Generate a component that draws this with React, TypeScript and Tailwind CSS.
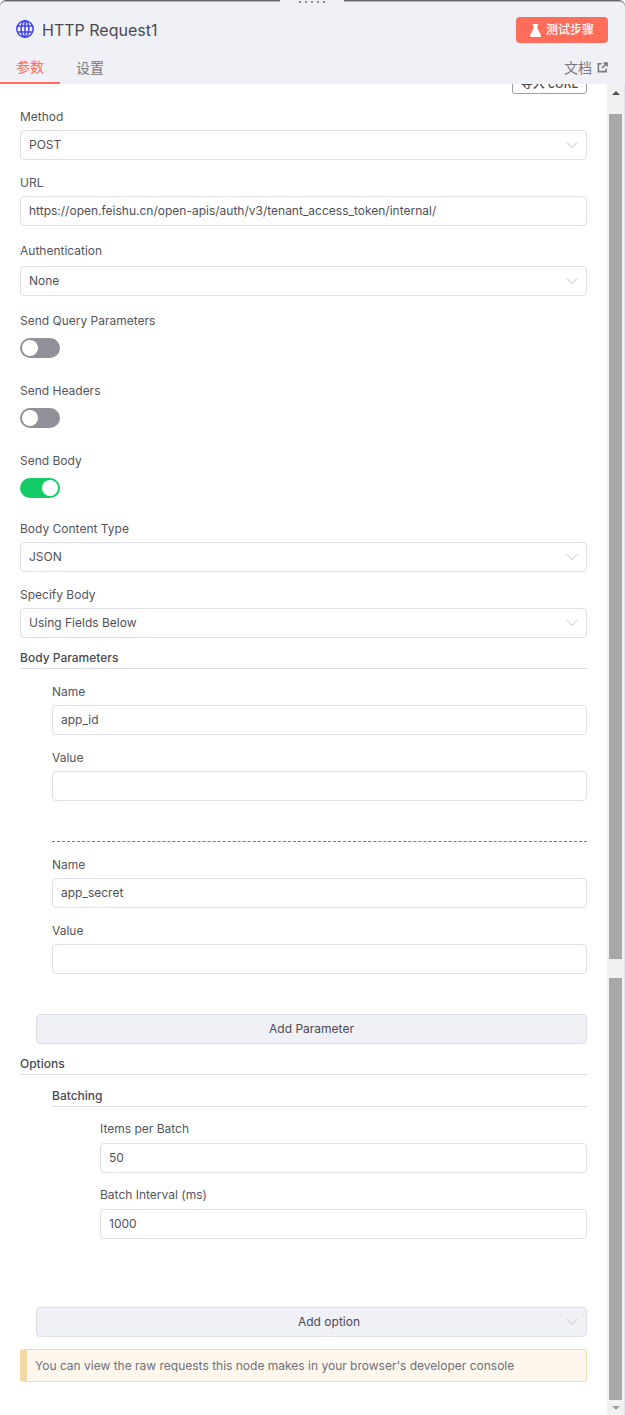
import React from 'react';
import { ChevronDown } from 'lucide-react';

const inputBase =
  'flex h-[30px] items-center rounded-[4px] border border-[#dcdfe8] bg-white px-2 text-[12px] text-[#505057]';

const Label = ({ text, className = '' }: { text: string; className?: string }) => (
  <div className={`flex h-5 items-center text-[12px] text-[#55555c] ${className}`}>{text}</div>
);

const Select = ({ value }: { value: string }) => (
  <div className={`${inputBase} justify-between`}>
    <span>{value}</span>
    <ChevronDown className="-mr-1 h-5 w-5 text-[#b9bac2]" strokeWidth={1.1} />
  </div>
);

const Input = ({ value = '' }: { value?: string }) => <div className={inputBase}>{value}</div>;

const Toggle = ({ on = false }: { on?: boolean }) => (
  <div
    className={`flex h-5 w-10 items-center rounded-full p-[2px] ${
      on ? 'justify-end bg-[#14cc66]' : 'justify-start bg-[#8f9098]'
    }`}
  >
    <div className="h-4 w-4 rounded-full bg-white" />
  </div>
);

const SectionTitle = ({ text, tall = false, className = '' }: { text: string; tall?: boolean; className?: string }) => (
  <div
    className={`flex items-center border-b border-[#dcdce6] text-[12px] font-medium text-[#4a4a52] ${
      tall ? 'h-[22px]' : 'h-[21px]'
    } ${className}`}
  >
    {text}
  </div>
);

const GrayButton = ({ text, chevron = false }: { text: string; chevron?: boolean }) => (
  <div
    className={`relative ml-4 flex h-[30px] items-center justify-center rounded-[4px] border border-[#dcdfe8] bg-[#f0f1f7] text-[12px] text-[#4a4a52] ${
      chevron ? 'pl-[35px]' : ''
    }`}
  >
    {text}
    {chevron && (
      <ChevronDown className="absolute right-[4px] top-[4px] h-5 w-5 text-[#b9bac2]" strokeWidth={1.1} />
    )}
  </div>
);

const GlobeIcon = () => (
  <svg viewBox="0 0 18 18" className="mb-[2px] h-[18px] w-[18px] shrink-0" fill="none" stroke="#4040e8" strokeWidth="1.5">
    <circle cx="9" cy="9" r="8.2" />
    <ellipse cx="9" cy="9" rx="3.8" ry="8.2" />
    <path d="M9 .8v16.4M1.6 6h14.8M1.6 12h14.8" />
  </svg>
);

const FlaskIcon = () => (
  <svg viewBox="0 0 12 14" className="h-[13px] w-[11px] shrink-0" fill="white">
    <path d="M3 0h6v1.2H8.2v3.6L11.8 12c.4.9-.2 2-1.2 2H1.4C.4 14-.2 12.9.2 12l3.6-7.2V1.2H3z" />
  </svg>
);

const DocLinkIcon = () => (
  <svg viewBox="0 0 12 12" className="h-[11px] w-[11px] shrink-0" fill="none" stroke="#77777f" strokeWidth="1.7">
    <path d="M5 2H1.5v8.5H10V7M7 1h4v4M11 1L5.5 6.5" />
  </svg>
);

export default function App() {
  return (
    <div className="flex h-[1415px] w-[625px] flex-col overflow-hidden bg-white font-['Inter','Noto_Sans_CJK_SC',sans-serif]">
      {/* Header */}
      <div className="relative h-[84px] shrink-0 rounded-t-[6px] border-t border-[#63636b] bg-[#f0f1f7] pt-[1px] shadow-[inset_0_1px_0_#b4b4bc]">
        <div className="absolute left-[280px] top-[-1px] flex h-[4px] w-[64px] items-center justify-center gap-1 bg-[#f0f1f7]">
          {[0, 1, 2, 3, 4].map((i) => (
            <span key={i} className="h-[2px] w-[2px] bg-[#8b8b93]" />
          ))}
        </div>
        <div className="flex h-[50px] items-center justify-between pl-4 pr-[17px] pt-[6px]">
          <div className="flex items-center gap-2">
            <GlobeIcon />
            <span className="text-[16px] text-[#4a4a52]">HTTP Request1</span>
          </div>
          <div className="flex h-[26px] w-[92px] items-center justify-center gap-[5px] rounded-[4px] bg-[#ff6d5a] text-[12px] font-medium text-white">
            <FlaskIcon />
            测试步骤
          </div>
        </div>
        <div className="flex items-start justify-between">
          <div className="flex">
            <div className="flex h-[32px] w-[60px] items-center border-b-2 border-[#ff6d5a] pb-[2px] pl-4 text-[14px] text-[#ff6d5a]">参数</div>
            <div className="flex h-[32px] items-center pb-[2px] pl-4 text-[14px] text-[#77777f]">设置</div>
          </div>
          <div className="flex h-[32px] items-center gap-[5px] pb-[2px] pr-[17px] text-[14px] text-[#77777f]">
            文档
            <DocLinkIcon />
          </div>
        </div>
      </div>

      <div className="flex min-h-0 flex-1">
        {/* Form */}
        <div className="w-[607px] shrink-0 overflow-hidden pl-5 pr-5">
          <div className="-mt-[10px] flex justify-end">
            <div className="flex h-5 w-[75px] items-center justify-center rounded-[3px] border border-[#9a9aa2] text-[12px] font-medium text-[#4a4a52]">
              导入 cURL
            </div>
          </div>

          <Label text="Method" className="mt-[13px] mb-[3px]" />
          <Select value="POST" />
          <Label text="URL" className="mt-[13px] mb-[3px]" />
          <Input value="https://open.feishu.cn/open-apis/auth/v3/tenant_access_token/internal/" />
          <Label text="Authentication" className="mt-[15px] mb-[5px]" />
          <Select value="None" />

          <Label text="Send Query Parameters" className="mt-[15px] mb-[7px]" />
          <Toggle />
          <Label text="Send Headers" className="mt-[23px] mb-[7px]" />
          <Toggle />
          <Label text="Send Body" className="mt-[23px] mb-[7px]" />
          <Toggle on />

          <Label text="Body Content Type" className="mt-[21px] mb-[3px]" />
          <Select value="JSON" />
          <Label text="Specify Body" className="mt-[13px] mb-[3px]" />
          <Select value="Using Fields Below" />

          <SectionTitle text="Body Parameters" className="mt-[10px]" />

          <div className="pl-8">
            <Label text="Name" className="mt-[13px] mb-[3px]" />
            <Input value="app_id" />
            <Label text="Value" className="mt-[13px] mb-[3px]" />
            <Input />
            <div className="mt-10 border-t border-dashed border-[#77777f]" />
            <Label text="Name" className="mt-[13px] mb-[3px]" />
            <Input value="app_secret" />
            <Label text="Value" className="mt-[13px] mb-[3px]" />
            <Input />
          </div>

          <div className="mt-10">
            <GrayButton text="Add Parameter" />
          </div>

          <SectionTitle text="Options" className="mt-[10px]" />

          <div className="pl-8">
            <SectionTitle text="Batching" tall className="mt-[10px]" />
            <div className="pl-12">
              <Label text="Items per Batch" className="mt-[12px] mb-[4px]" />
              <Input value="50" />
              <Label text="Batch Interval (ms)" className="mt-[12px] mb-[4px]" />
              <Input value="1000" />
            </div>
          </div>

          <div className="mt-[68px]">
            <GrayButton text="Add option" chevron />
          </div>

          <div className="mt-3 flex h-[33px] items-center rounded-[3px] border border-l-[7px] border-[#f0dcae] border-l-[#f5d9a5] bg-[#fdf7ee] pl-2 text-[12px] text-[#6f6f78]">
            You can view the raw requests this node makes in your browser's developer console
          </div>
        </div>

        {/* Scrollbar */}
        <div className="flex w-[18px] shrink-0 flex-col items-center border-r border-[#e4e4f0] bg-[#f1f1f1]">
          <div className="flex h-[30px] w-full items-start justify-center pt-[7px]">
            <div className="h-0 w-0 border-x-[4px] border-b-[4px] border-x-transparent border-b-[#505050]" />
          </div>
          <div className="h-[845px] w-[13px] bg-[#a8a8a8]" />
          <div className="h-[19px] w-[13px]" />
          <div className="h-[422px] w-[13px] bg-[#a8a8a8]" />
          <div className="flex flex-1 w-full items-center justify-center">
            <div className="h-0 w-0 border-x-[4px] border-t-[4px] border-x-transparent border-t-[#a0a0a0]" />
          </div>
        </div>
      </div>
    </div>
  );
}
